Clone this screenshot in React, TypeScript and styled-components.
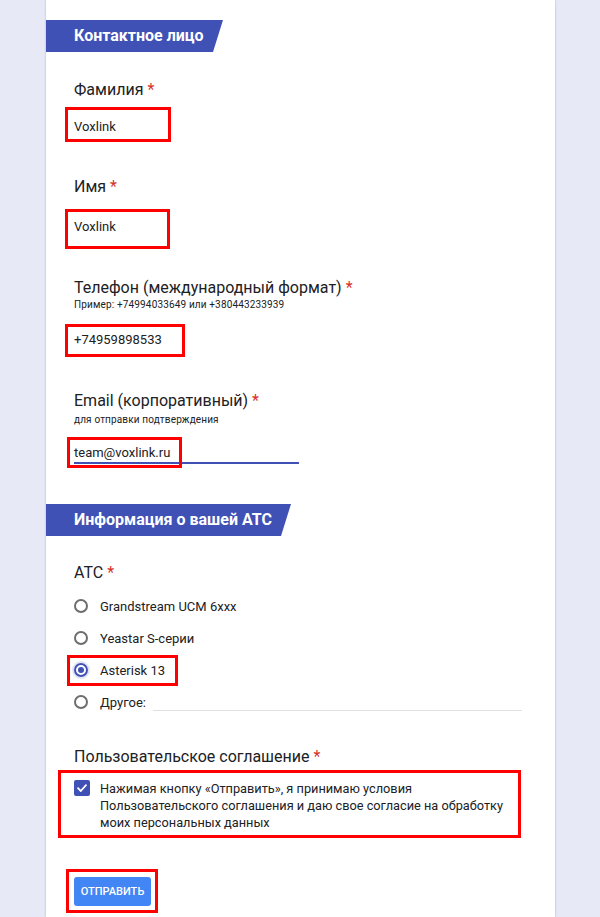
import React from "react";
import styled, { createGlobalStyle } from "styled-components";

const Global = createGlobalStyle`
  html, body { margin: 0; padding: 0; }
  body {
    background: #e8e9f6;
    font-family: Roboto, "Noto Sans", Arial, sans-serif;
    color: #202124;
  }
`;

const Page = styled.div`
  height: 917px;
  overflow: hidden;
`;

const Card = styled.main`
  margin-left: 46px;
  width: 509px;
  min-height: 917px;
  background: #ffffff;
  box-shadow: 0 0 2px rgba(60, 64, 120, 0.35);
  padding-top: 20px;
  box-sizing: border-box;
`;

const SectionHeader = styled.div<{ $w: number; $mt?: number }>`
  width: ${(p) => p.$w}px;
  height: 32px;
  margin-top: ${(p) => p.$mt ?? 0}px;
  background: #3f51b5;
  clip-path: polygon(0 0, 100% 0, calc(100% - 10px) 100%, 0 100%);
  color: #ffffff;
  font-weight: 700;
  font-size: 16px;
  line-height: 32px;
  padding-left: 28px;
  box-sizing: border-box;
  white-space: nowrap;
`;

const Body = styled.div`
  padding-left: 28px;
`;

const Label = styled.div<{ $mt: number }>`
  margin-top: ${(p) => p.$mt}px;
  font-size: 16px;
  line-height: 20px;
  color: #202124;
`;

const Req = styled.span`
  color: #d93025;
  margin-left: 4px;
`;

const Hint = styled.div<{ $mt: number }>`
  margin-top: ${(p) => p.$mt}px;
  font-size: 10px;
  line-height: 12px;
  letter-spacing: 0.15px;
  color: #202124;
`;

const Answer = styled.div<{ $mt: number; $underline?: boolean }>`
  position: relative;
  margin-top: ${(p) => p.$mt}px;
  font-size: 13px;
  line-height: 18px;
  color: #202124;
  width: ${(p) => (p.$underline ? "225px" : "auto")};
  border-bottom: ${(p) => (p.$underline ? "2px solid #3f51b5" : "none")};
`;

const Marker = styled.span<{ $l: number; $t: number; $w: number; $h: number }>`
  position: absolute;
  left: ${(p) => p.$l}px;
  top: ${(p) => p.$t}px;
  width: ${(p) => p.$w}px;
  height: ${(p) => p.$h}px;
  border: 3px solid #ff0000;
  box-sizing: border-box;
  pointer-events: none;
`;

const RadioList = styled.div`
  margin-top: 7px;
  display: flex;
  flex-direction: column;
`;

const RadioRow = styled.div`
  position: relative;
  height: 32px;
  display: flex;
  align-items: center;
  font-size: 13px;
  color: #202124;
`;

const RadioCircle = styled.span<{ $on?: boolean }>`
  width: 14px;
  height: 14px;
  border-radius: 50%;
  border: 2px solid ${(p) => (p.$on ? "#3f51b5" : "#6e6e6e")};
  box-sizing: border-box;
  margin-right: 12px;
  display: flex;
  align-items: center;
  justify-content: center;
  box-shadow: ${(p) => (p.$on ? "0 0 0 2px rgba(63, 81, 181, 0.15)" : "none")};
  &::after {
    content: "";
    width: 6px;
    height: 6px;
    border-radius: 50%;
    background: ${(p) => (p.$on ? "#3f51b5" : "transparent")};
  }
`;

const OtherLine = styled.span`
  margin-left: 7px;
  margin-top: 16px;
  width: 369px;
  border-bottom: 1px solid #e0e0e0;
`;

const Agreement = styled.div`
  position: relative;
  margin-top: 13px;
  display: flex;
  align-items: flex-start;
  font-size: 12.75px;
  line-height: 17px;
  color: #202124;
`;

const CheckBox = styled.span`
  width: 16px;
  height: 16px;
  border-radius: 2px;
  background: #3f51b5;
  margin-right: 10px;
  flex: none;
  display: flex;
  align-items: center;
  justify-content: center;
`;

const AgreementText = styled.div`
  white-space: nowrap;
`;

const SubmitWrap = styled.div`
  position: relative;
  margin-top: 46px;
  width: 77px;
`;

const Submit = styled.button`
  width: 77px;
  height: 29px;
  border: none;
  border-radius: 3px;
  background: #4285f4;
  color: #ffffff;
  font-family: Roboto, Arial, sans-serif;
  font-weight: 500;
  font-size: 11px;
  padding: 0;
`;

export default function App() {
  return (
    <Page>
      <Global />
      <Card>
        <SectionHeader $w={177}>Контактное лицо</SectionHeader>
        <Body>
          <Label $mt={28}>
            Фамилия<Req>*</Req>
          </Label>
          <Answer $mt={18}>
            Voxlink
            <Marker $l={-9} $t={-11} $w={106} $h={35} />
          </Answer>

          <Label $mt={41}>
            Имя<Req>*</Req>
          </Label>
          <Answer $mt={21}>
            Voxlink
            <Marker $l={-9} $t={-9} $w={105} $h={40} />
          </Answer>

          <Label $mt={42}>
            Телефон (международный формат)<Req>*</Req>
          </Label>
          <Hint $mt={1}>Пример: +74994033649 или +380443233939</Hint>
          <Answer $mt={20}>
            +74959898533
            <Marker $l={-9} $t={-7} $w={120} $h={33} />
          </Answer>

          <Label $mt={42}>
            Email (корпоративный)<Req>*</Req>
          </Label>
          <Hint $mt={3}>для отправки подтверждения</Hint>
          <Answer $mt={18} $underline>
            team@voxlink.ru
            <Marker $l={-7} $t={-7} $w={115} $h={31} />
          </Answer>
        </Body>

        <SectionHeader $w={245} $mt={40}>
          Информация о вашей АТС
        </SectionHeader>
        <Body>
          <Label $mt={27}>
            АТС<Req>*</Req>
          </Label>
          <RadioList>
            <RadioRow>
              <RadioCircle />
              Grandstream UCM 6xxx
            </RadioRow>
            <RadioRow>
              <RadioCircle />
              Yeastar S-серии
            </RadioRow>
            <RadioRow>
              <RadioCircle $on />
              Asterisk 13
              <Marker $l={-7} $t={1} $w={111} $h={31} />
            </RadioRow>
            <RadioRow>
              <RadioCircle />
              Другое:
              <OtherLine />
            </RadioRow>
          </RadioList>

          <Label $mt={29}>
            Пользовательское соглашение<Req>*</Req>
          </Label>
          <Agreement>
            <CheckBox>
              <svg width="12" height="12" viewBox="0 0 12 12">
                <path d="M2 6.2 L4.8 9 L10 3.2" fill="none" stroke="#fff" strokeWidth="1.8" strokeLinecap="round" strokeLinejoin="round" />
              </svg>
            </CheckBox>
            <AgreementText>
              Нажимая кнопку «Отправить», я принимаю условия
              <br />
              Пользовательского соглашения и даю свое согласие на обработку
              <br />
              моих персональных данных
            </AgreementText>
            <Marker $l={-16} $t={-10} $w={463} $h={68} />
          </Agreement>

          <SubmitWrap>
            <Submit>ОТПРАВИТЬ</Submit>
            <Marker $l={-8} $t={-8} $w={92} $h={44} />
          </SubmitWrap>
        </Body>
      </Card>
    </Page>
  );
}
